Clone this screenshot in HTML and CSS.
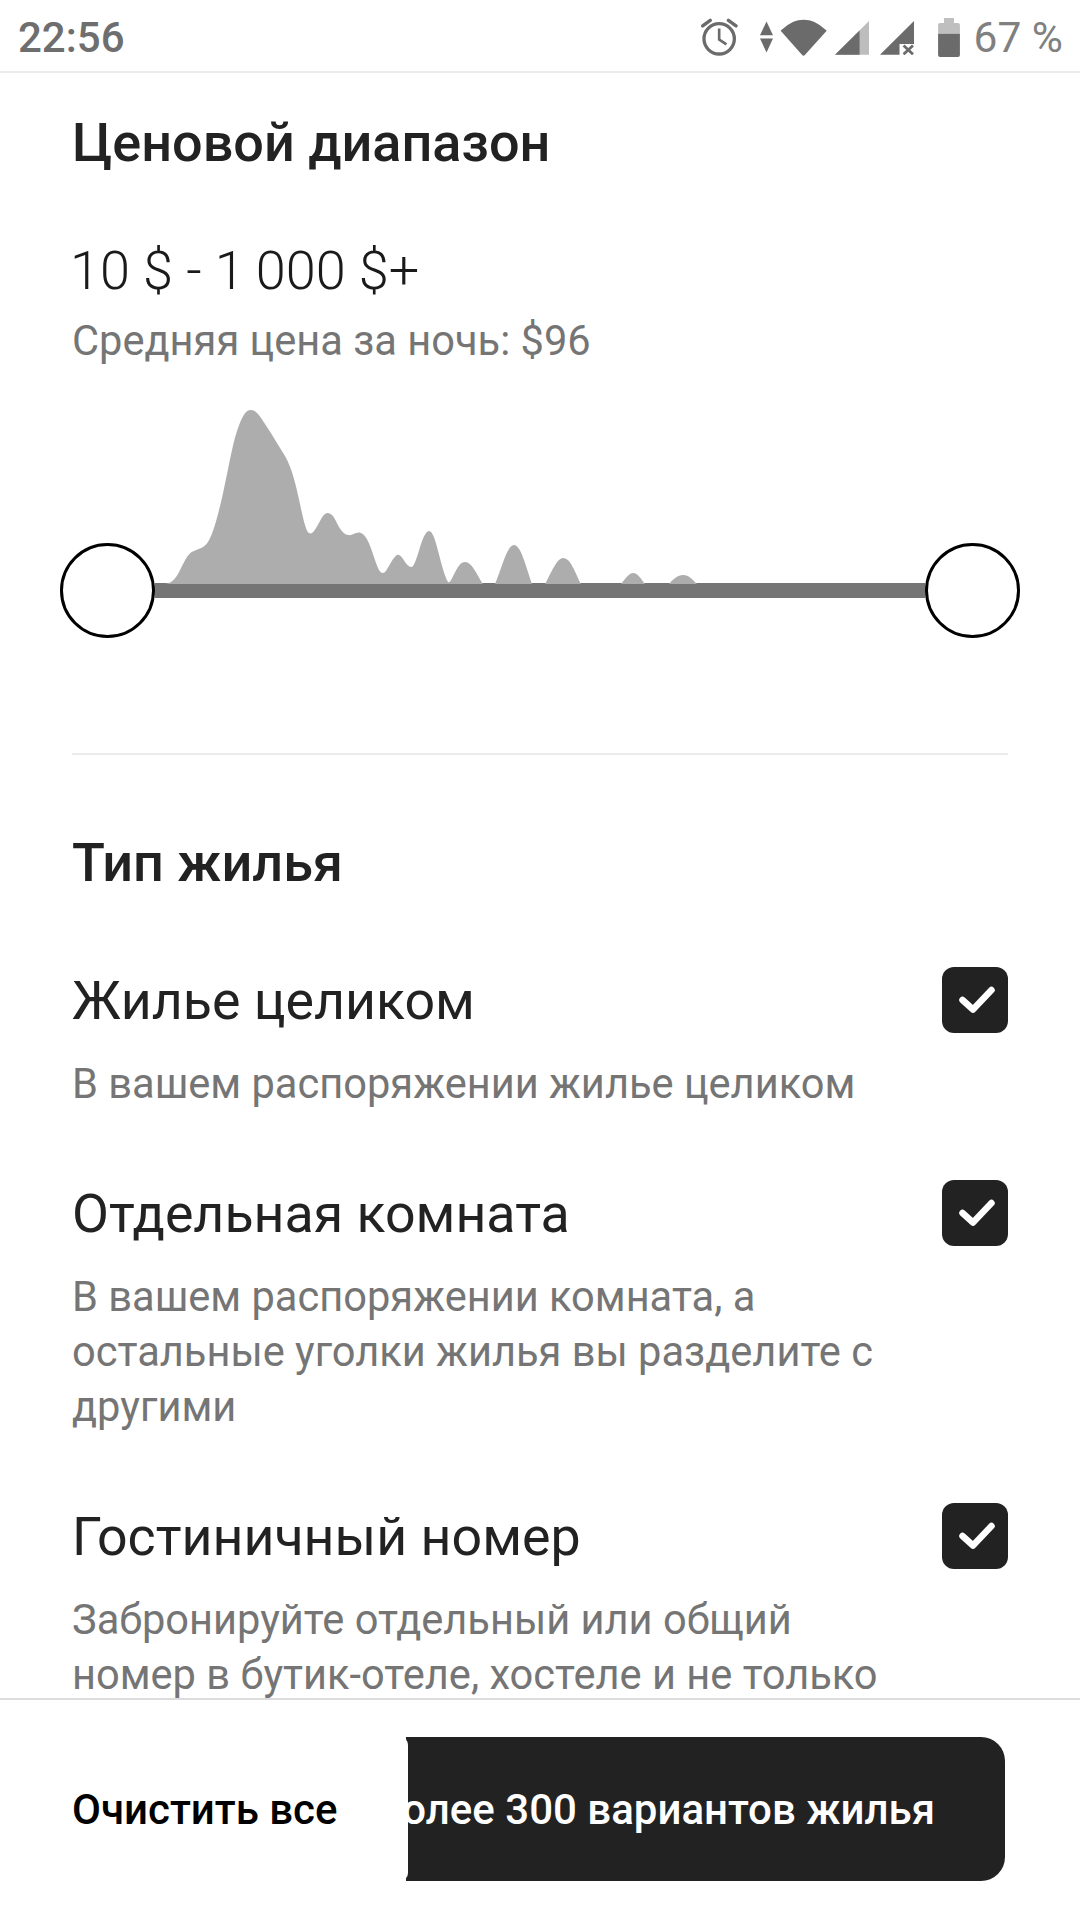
FILE: index.html
```html
<!DOCTYPE html>
<html lang="ru">
<head>
  <meta charset="utf-8">
  <title>Фильтры</title>
  <link rel="stylesheet" href="styles.css">
</head>
<body>
  <div class="statusbar">
    <span class="time">22:56</span>
    <div class="status-icons">
      <!-- alarm -->
      <svg class="ic-alarm" viewBox="60 50 112 118">
        <circle cx="115" cy="113" r="46" fill="none" stroke="#6b6b6b" stroke-width="10"/>
        <path d="M115 82V115L137 130" fill="none" stroke="#6b6b6b" stroke-width="8"/>
        <path d="M65 74L88 57M166 74L143 57" fill="none" stroke="#6b6b6b" stroke-width="10" stroke-linecap="round"/>
      </svg>
      <!-- data arrows -->
      <svg class="ic-data" viewBox="237 50 40 95">
        <path d="M257 50L277 92H237ZM237 102H277L257 145Z" fill="#6b6b6b"/>
      </svg>
      <!-- wifi -->
      <svg class="ic-wifi" viewBox="298 50 140 110">
        <path d="M300 85Q303 82 306 80C345 43 392 43 431 80Q434 82 437 85L372 157Q368 161 364 157Z" fill="#6b6b6b"/>
      </svg>
      <!-- signal 1 -->
      <svg class="ic-signal" viewBox="462 60 101 101">
        <path d="M462 160L563 60V160Z" fill="#bdbdbd"/>
        <path d="M462 160L535 88V160Z" fill="#6b6b6b"/>
      </svg>
      <!-- signal 2, no sim -->
      <svg class="ic-signal2" viewBox="597 60 101 101">
        <path d="M597 160L698 60V128H655V160Z" fill="#6b6b6b"/>
        <path d="M667 133L695 159M695 133L667 159" stroke="#6b6b6b" stroke-width="8"/>
      </svg>
      <!-- battery -->
      <svg class="ic-battery" viewBox="771 47 66 118">
        <path d="M789 47H819V62H831Q837 62 837 68V95H771V68Q771 62 777 62H789Z" fill="#bfbfbf"/>
        <path d="M771 95H837V159Q837 165 831 165H777Q771 165 771 159Z" fill="#6b6b6b"/>
      </svg>
      <span class="battery-text">67 %</span>
    </div>
  </div>

  <div class="content">
    <h2 class="section-title title-price">Ценовой диапазон</h2>
    <p class="price-range">10 $ - 1&#8201;000 $+</p>
    <p class="price-avg">Средняя цена за ночь: $96</p>

    <div class="slider">
      <svg class="histogram" viewBox="60 400 960 190">
        <path fill="#adadad" d="M165 583C172 582 175 578 178 573C184 562 187 552 194 550C200 547 204 547 208 541C214 531 218 513 222 497C228 470 232 445 237 430C242 416 245 409 251 409C256 409 260 415 265 423C272 433 278 444 285 455C292 467 296 484 300 503C303 517 306 531 309 532C314 535 318 522 323 515C326 511 329 511 333 515C337 521 341 533 348 534C353 535 356 530 361 532C367 534 371 547 375 559C378 568 380 572 383 572C387 572 391 558 397 554C402 552 405 565 411 566C417 567 421 531 429 530C436 530 440 566 448 581C452 584 456 561 465 561C472 561 477 574 483 583Z"/>
        <path fill="#adadad" d="M495 583C502 567 507 544 514 544C521 544 526 566 532 583Z"/>
        <path fill="#adadad" d="M545 583C551 572 557 557 563 557C571 557 575 572 581 583Z"/>
        <path fill="#adadad" d="M621 583C625 578 629 572 633 572C638 572 641 578 645 583Z"/>
        <path fill="#adadad" d="M669 583C673 578 678 574 683 574C689 574 692 578 697 583Z"/>
      </svg>
      <div class="knob"></div>
      <div class="track"></div>
      <div class="knob"></div>
    </div>

    <hr class="divider">

    <h2 class="section-title title-type">Тип жилья</h2>

    <div class="option">
      <div class="option-text">
        <div class="option-name">Жилье целиком</div>
        <div class="option-desc">В вашем распоряжении жилье целиком</div>
      </div>
      <div class="checkbox"><svg viewBox="0 0 66 66"><path d="M20.5 33L31 42.5L49.5 23" fill="none" stroke="#fff" stroke-width="6.5" stroke-linecap="round" stroke-linejoin="round"/></svg></div>
    </div>

    <div class="option">
      <div class="option-text">
        <div class="option-name">Отдельная комната</div>
        <div class="option-desc">В вашем распоряжении комната, а<br>остальные уголки жилья вы разделите с<br>другими</div>
      </div>
      <div class="checkbox"><svg viewBox="0 0 66 66"><path d="M20.5 33L31 42.5L49.5 23" fill="none" stroke="#fff" stroke-width="6.5" stroke-linecap="round" stroke-linejoin="round"/></svg></div>
    </div>

    <div class="option">
      <div class="option-text">
        <div class="option-name">Гостиничный номер</div>
        <div class="option-desc">Забронируйте отдельный или общий<br>номер в бутик-отеле, хостеле и не только</div>
      </div>
      <div class="checkbox"><svg viewBox="0 0 66 66"><path d="M20.5 33L31 42.5L49.5 23" fill="none" stroke="#fff" stroke-width="6.5" stroke-linecap="round" stroke-linejoin="round"/></svg></div>
    </div>
  </div>

  <div class="footer">
    <a class="clear-btn">Очистить все</a>
    <button class="show-btn"><span>Показать более 300 вариантов жилья</span></button>
  </div>
</body>
</html>
```

FILE: styles.css
```css
* {
  box-sizing: border-box;
}

html, body {
  margin: 0;
  padding: 0;
}

body {
  width: 1080px;
  height: 1920px;
  overflow: hidden;
  position: relative;
  background: #fff;
  font-family: Roboto, "Noto Sans", sans-serif;
  color: #222;
}

.statusbar {
  height: 73px;
  padding: 3px 17px 0 18px;
  display: flex;
  justify-content: space-between;
  align-items: center;
  border-bottom: 2px solid #ebebeb;
}

.time {
  font-size: 42px;
  font-weight: 500;
  color: #6e6e6e;
}

.status-icons {
  display: flex;
  align-items: center;
}

.status-icons svg {
  display: block;
}

.ic-alarm { width: 37px; height: 39px; margin-right: 22px; }
.ic-data { width: 13px; height: 32px; margin-right: 7px; }
.ic-wifi { width: 47px; height: 37px; margin-right: 8px; }
.ic-signal { width: 34px; height: 34px; margin-right: 11px; margin-top: 2px; }
.ic-signal2 { width: 34px; height: 34px; margin-right: 24px; margin-top: 2px; }
.ic-battery { width: 22px; height: 39px; margin-right: 14px; }

.battery-text {
  font-size: 42.5px;
  color: #808080;
}

.content {
  padding: 0 72px;
}

.section-title {
  margin: 0;
  font-size: 54px;
  font-weight: 500;
  line-height: 56px;
}

.title-price {
  margin-top: 42px;
}

.title-type {
  margin-top: 80px;
}

.price-range {
  margin: 70px 0 0 -2px;
  font-size: 54px;
  font-weight: 300;
  line-height: 60px;
  color: #1a1a1a;
}

.price-avg {
  margin: 13px 0 0;
  font-size: 41.6px;
  line-height: 54px;
  color: #757575;
}

.slider {
  position: relative;
  margin: 175px -12px 0;
  height: 95px;
  display: flex;
  align-items: center;
}

.histogram {
  position: absolute;
  left: 0;
  bottom: 47px;
  width: 960px;
  height: 190px;
}

.track {
  flex: 1;
  height: 15px;
  background: #757575;
}

.knob {
  position: relative;
  width: 95px;
  height: 95px;
  flex: none;
  border-radius: 50%;
  border: 3.5px solid #000;
  background: #fff;
}

.divider {
  margin: 115px 0 0;
  border: 0;
  height: 2px;
  background: #ebebeb;
}

.option {
  display: flex;
  justify-content: space-between;
  align-items: flex-start;
  margin-top: 73px;
}

.title-type + .option {
  margin-top: 80px;
}

.option-name {
  font-size: 53.7px;
  line-height: 60px;
}

.option-desc {
  margin-top: 25px;
  font-size: 41.6px;
  line-height: 55px;
  color: #757575;
}

.checkbox {
  width: 66px;
  height: 66px;
  flex: none;
  margin-top: -4px;
  border-radius: 12px;
  background: #222;
}

.checkbox svg {
  display: block;
}

.footer {
  position: absolute;
  left: 0;
  right: 0;
  bottom: 0;
  height: 222px;
  padding: 37px 75px 39px 72px;
  display: flex;
  align-items: center;
  background: #fff;
  border-top: 2px solid #dcdcdc;
}

/* white block with round corners sits over the start of the long button */
.clear-btn {
  position: relative;
  z-index: 1;
  width: 336px;
  height: 144px;
  flex: none;
  display: flex;
  align-items: center;
  border-radius: 0 8px 8px 0;
  background: #fff;
  font-size: 42px;
  font-weight: 500;
  color: #000;
}

.show-btn {
  flex: 1;
  min-width: 0;
  height: 144px;
  margin-left: -2px;
  padding: 0 70px 0 0;
  display: flex;
  justify-content: flex-end;
  align-items: center;
  overflow: hidden;
  border: 0;
  border-radius: 0 24px 24px 0;
  background: #222;
  color: #fff;
  font-family: inherit;
  font-size: 42px;
  font-weight: 500;
  white-space: nowrap;
}
```
